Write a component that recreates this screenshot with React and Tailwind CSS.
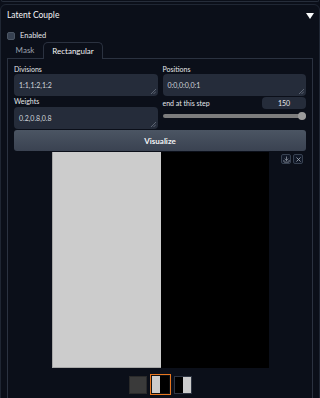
import { X, Download } from "lucide-react";

function Grip() {
    return (
        <svg className="absolute right-[2px] bottom-[2px]" width="5" height="5" viewBox="0 0 5 5">
            <path d="M5 0 L0 5 M5 2.5 L2.5 5" stroke="#6b7280" strokeWidth="0.8" />
        </svg>
    );
}

function Field({ value }) {
    return (
        <div className="relative h-[22px] rounded-[4px] bg-[#252c3a] pl-[5px] flex items-center text-[7px] text-[#d1d5db]">
            {value}
            <Grip />
        </div>
    );
}

export default function App() {
    return (
        <div className="w-[320px] h-[398px] overflow-hidden bg-[#0b0f19] font-['Lato',sans-serif] text-[#e5e7eb]">
            <div className="mx-[1px] h-[2px] rounded-b-[4px] border-x border-b border-[#262d3a]" />

            <div className="mt-[2px] h-[420px] rounded-t-[6px] border border-[#1f2633] px-[6px]">
                {/* header */}
                <div className="h-[21px] flex items-center justify-between">
                    <span className="text-[8.5px] text-[#f3f4f6]">Latent Couple</span>
                    <svg width="8" height="6" viewBox="0 0 8 6" className="mr-[-1px]">
                        <polygon points="0,0 8,0 4,6" fill="#f9fafb" />
                    </svg>
                </div>

                <div className="mt-[5px] h-[10px] flex items-center gap-[5px]">
                    <div className="w-[8px] h-[8px] rounded-[2px] bg-[#374151] border border-[#4b5563]" />
                    <span className="text-[7.5px] text-[#e5e7eb]">Enabled</span>
                </div>

                {/* tabs */}
                <div className="mt-[1px] h-[16px] flex items-end">
                    <div className="w-[36px] h-[16px] flex items-center justify-center text-[8px] text-[#9ca3af]">Mask</div>
                    <div className="relative z-10 w-[60px] h-[17px] mb-[-1px] flex items-center justify-center rounded-t-[5px] border-x border-t border-[#2b3240] bg-[#0b0f19] text-[8px] text-[#f3f4f6]">
                        Rectangular
                    </div>
                </div>

                <div className="h-[400px] border border-[#2b3240] px-[6px] pt-[5px]">
                    <div className="grid grid-cols-2 gap-x-[5px]">
                        <div>
                            <div className="h-[10px] flex items-center text-[7px] text-[#e5e7eb]">Divisions</div>
                            <Field value="1:1,1:2,1:2" />
                            <div className="h-[11px] flex items-center text-[7px] text-[#e5e7eb]">Weights</div>
                            <Field value="0.2,0.8,0.8" />
                        </div>
                        <div>
                            <div className="h-[10px] flex items-center text-[7px] text-[#e5e7eb]">Positions</div>
                            <Field value="0:0,0:0,0:1" />
                            <div className="mt-[1px] h-[12px] flex items-center justify-between">
                                <span className="text-[7px] text-[#e5e7eb]">end at this step</span>
                                <div className="w-[44px] h-[12px] rounded-[4px] bg-[#252c3a] flex items-center justify-center text-[7px] text-[#e5e7eb]">150</div>
                            </div>
                            <div className="mt-[3px] h-[8px] relative flex items-center">
                                <div className="w-full h-[4px] rounded-full bg-[#7d7d7d]" />
                                <div className="absolute right-0 w-[8px] h-[8px] rounded-full bg-[#9b9b9b]" />
                            </div>
                        </div>
                    </div>

                    <button className="mt-[1px] w-full h-[21px] rounded-[3px] bg-gradient-to-b from-[#4b5563] to-[#3a4251] text-[8px] font-bold text-[#f3f4f6] flex items-center justify-center">
                        Visualize
                    </button>

                    <div className="relative h-[217px] flex justify-center">
                        <div className="mt-[1px] w-[217px] h-[216px] flex">
                            <div className="w-[109px] h-full bg-[#cccccc] border-l border-b border-[#a8a8a8]" />
                            <div className="w-[108px] h-full bg-black" />
                        </div>
                        <div className="absolute right-[3px] top-[3px] flex gap-[2px]">
                            <div className="w-[10px] h-[10px] rounded-[2px] border border-[#374151] bg-[#111827] flex items-center justify-center text-[#9ca3af]">
                                <Download size={7} strokeWidth={2.5} />
                            </div>
                            <div className="w-[10px] h-[10px] rounded-[2px] border border-[#374151] bg-[#111827] flex items-center justify-center text-[#9ca3af]">
                                <X size={7} strokeWidth={3} />
                            </div>
                        </div>
                    </div>

                    <div className="mt-[6px] flex justify-center items-center gap-[3px]">
                        <div className="w-[18px] h-[18px] border border-[#2a2a2a] bg-[#3a3a3a]" />
                        <div className="w-[21px] h-[21px] border-[1.5px] border-[#e8761f] flex p-[1px] bg-[#111]">
                            <div className="flex-1 bg-[#cccccc]" />
                            <div className="flex-1 bg-black" />
                        </div>
                        <div className="w-[18px] h-[18px] border border-[#2f3542] flex">
                            <div className="flex-1 bg-black" />
                            <div className="flex-1 bg-[#cccccc]" />
                        </div>
                    </div>
                </div>
            </div>
        </div>
    );
}
